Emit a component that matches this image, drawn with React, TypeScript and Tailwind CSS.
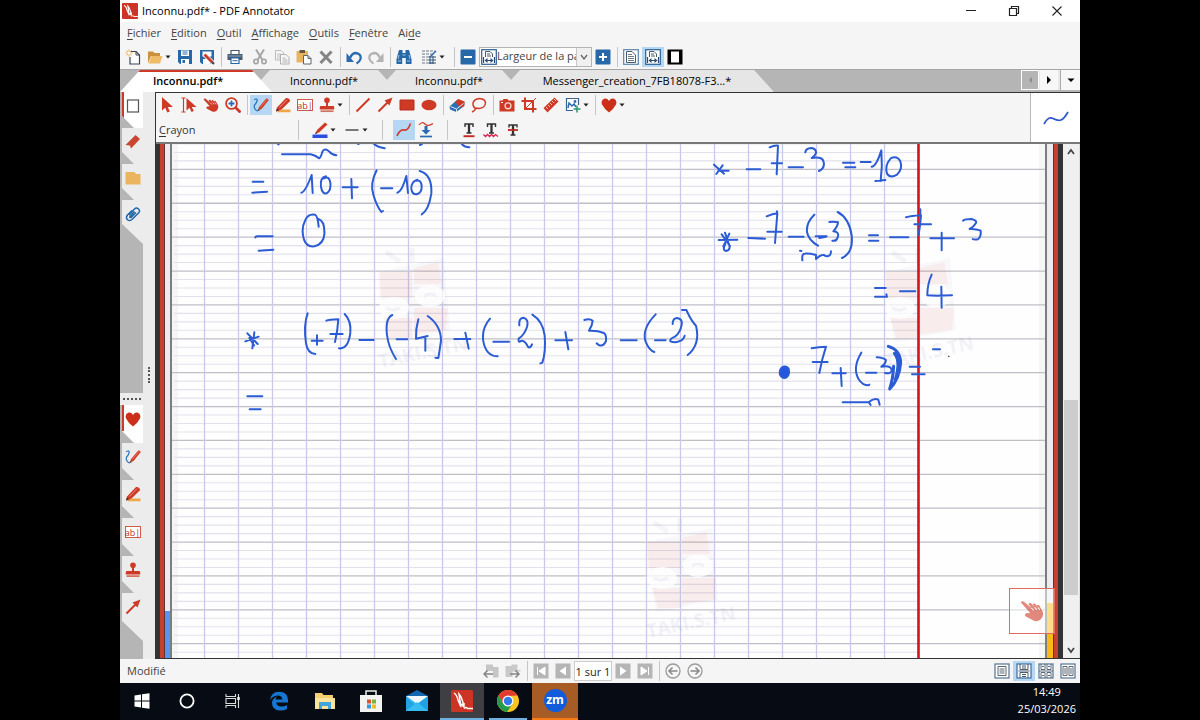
import React from "react";
import type { ReactNode } from "react";

const RED = "#cf3a26";
const BLUE = "#2a6bb0";
const GREY = "#a6a6a6";
const DARK = "#3c4650";

function Svg({ children, size = "size-4", box = "0 0 16 16" }: { children: ReactNode; size?: string; box?: string }) {
  return (
    <svg viewBox={box} className={`${size} shrink-0`} fill="none" aria-hidden="true">
      {children}
    </svg>
  );
}

const icons: Record<string, ReactNode> = {
  newDoc: (
    <>
      <path d="M6 2.500h5l3.500 3.500V15H5V8" stroke={DARK} strokeWidth="1.200" fill="#fff" />
      <path d="M11 2.500V6h3.500" stroke={DARK} />
      <path d="M4 .5v7M.5 4h7M1.500 1.500l5 5M6.500 1.500l-5 5" stroke="#eda54a" />
      <circle cx="4" cy="4" r="1.600" fill="#fff" />
    </>
  ),
  open: (
    <>
      <path d="M1 2.500h5L7.500 4H13v3H4l-3 7Z" fill="#c9913d" />
      <path d="M4.500 7H15.500l-2.500 7.500H1.500Z" fill="#eebb67" />
    </>
  ),
  save: (
    <>
      <path d="M1 1h14v14H3L1 13Z" fill="#2768a9" />
      <path d="M4 1.500h8v5.500H4ZM4 10h8v5H4Z" fill="#fff" />
      <path d="M5.500 3h5M5.500 5h5" stroke="#2768a9" />
      <path d="M5.500 11h2.500v3H5.500Z" fill="#2768a9" />
    </>
  ),
  saveAs: (
    <>
      <path d="M1 1h14v14H3L1 13Z" fill="#2768a9" />
      <path d="M3.500 2.500h9v5h-9ZM4 10h7v5H4Z" fill="#fff" />
      <path d="m5 5 9 9" stroke="#fff" strokeWidth="4.500" />
      <path d="m5.500 5.500 8 8" stroke={RED} strokeWidth="2.800" />
      <path d="m13 13 2 2" stroke="#444" strokeWidth="2" />
    </>
  ),
  print: (
    <>
      <path d="M4 1.500h8v4H4Z" fill="#fff" stroke="#4c5966" strokeWidth="1.200" />
      <path d="M.5 5h15v6H.5Z" fill="#4c5966" />
      <path d="M1.500 7h13" stroke="#83b0dd" />
      <path d="M4 9h8v5.500H4Z" fill="#fff" stroke="#2768a9" strokeWidth="1.200" />
      <path d="M5.500 11.700h5" stroke="#2768a9" />
    </>
  ),
  cut: (
    <>
      <path d="m4 .5 6.500 10.500M12 .5 5.500 11" stroke={GREY} strokeWidth="2" />
      <circle cx="4" cy="12.500" r="2.200" stroke={GREY} strokeWidth="1.700" />
      <circle cx="12" cy="12.500" r="2.200" stroke={GREY} strokeWidth="1.700" />
    </>
  ),
  copy: (
    <>
      <path d="M1.500 1.500H7L9.500 4V11h-8Z" stroke="#bcbcbc" fill="#f7f7f7" />
      <path d="M3 5h4M3 7h4M3 9h3" stroke="#bcbcbc" />
      <path d="M6.500 5.500h5.500l3 3V15H6.500Z" stroke="#b0b0b0" fill="#f7f7f7" />
      <path d="M8.500 9h3M8.500 11h5M8.500 13h5" stroke="#b0b0b0" />
    </>
  ),
  paste: (
    <>
      <path d="M.5 2h11.500v11.500H.5Z" fill="#eab35d" />
      <path d="M3.500 1h5.500v3H3.500Z" fill="#62594d" />
      <path d="M7.500 6.500H12l3 3V15H7.500Z" fill="#fff" stroke="#596673" />
      <path d="M12 6.500v3h3" stroke="#596673" />
    </>
  ),
  del: <path d="m2.500 2.500 11 11.500M13.500 2.500 2.500 14" stroke="#858585" strokeWidth="3" />,
  undo: (
    <>
      <path d="M4 9Q6 4 10 4 15.500 5 14.500 10 13.500 13 10.500 14.500" stroke={BLUE} strokeWidth="2.300" />
      <path d="M.5 4v9H8Z" fill={BLUE} />
    </>
  ),
  redo: (
    <>
      <path d="M12 9Q10 4 6 4 .5 5 1.500 10 2.500 13 5.500 14.500" stroke="#b3b3b3" strokeWidth="2.300" />
      <path d="M15.500 4v9H8Z" fill="#b3b3b3" />
    </>
  ),
  find: (
    <>
      <path d="M3 1h3.500v3H9.500V1H13l2.500 9v5H9.800V9H6.200v6H.5v-5Z" fill="#2768a9" />
      <path d="M3 6 2 10M13 6l1 4M2 12h3M11 12h3M6.500 6h3" stroke="#9fc5ea" />
    </>
  ),
  grid: (
    <>
      <path d="M1 2h13M1 5h11M1 8h8M1 11h8M1 14h11" stroke="#6e7b8b" strokeDasharray="3 1" />
      <path d="M8 8h7M8 11h7M8 14h7M9 7v8M12 7v8" stroke="#33537a" />
      <path d="m9 8 6-6" stroke={BLUE} strokeWidth="1.500" />
    </>
  ),
  minus: (
    <>
      <rect x=".5" y=".5" width="15" height="15" rx="1" fill="#2768a9" />
      <path d="M4 8h8" stroke="#fff" strokeWidth="2" />
    </>
  ),
  plus: (
    <>
      <rect x=".5" y=".5" width="15" height="15" rx="1" fill="#2768a9" />
      <path d="M4 8h8M8 4v8" stroke="#fff" strokeWidth="2" />
    </>
  ),
  fitWidth: (
    <>
      <rect x=".7" y=".7" width="14.600" height="14.600" stroke="#2c5f96" strokeWidth="1.200" fill="#fff" />
      <path d="M4.500 8V2.500H9L11.500 5v3" stroke="#4b5a69" />
      <path d="M6 5h3M6 7h4" stroke="#4b5a69" />
      <path d="M2.500 8v6M13.500 8v6M4 11.500h8" stroke="#2a4a70" strokeWidth="1.200" />
      <path d="M3.500 11.500 6.500 9v5ZM12.500 11.500 9.500 9v5Z" fill="#2a4a70" />
    </>
  ),
  fitPage: (
    <>
      <rect x=".7" y=".7" width="14.600" height="14.600" stroke="#5b84ad" strokeWidth="1.200" fill="#fff" />
      <path d="M3.500 2.500H9l3.500 3.500v7.500h-9Z" stroke="#4b5a69" />
      <path d="M5 5.500h4M5 7.500h6M5 9.500h6M5 11.500h6" stroke="#6e7b88" />
    </>
  ),
  full: (
    <>
      <path d="M.5.5h15v15H.5Z" fill="#000" />
      <path d="M4 2.500h8v11H4Z" fill="#fff" />
    </>
  ),
  select: <path d="M3 0v13.500l3.200-2.800L8.300 15.500l2.500-1.100-2-4.400H14Z" fill={RED} />,
  textSelect: (
    <>
      <path d="M.5 1h4M2.500 1v14M.5 15h4" stroke={RED} strokeWidth="1.100" />
      <path d="M5.500 1v12.500l3-2.700 2 4.300 2.300-1-2-4.200H15.500Z" fill={RED} />
    </>
  ),
  hand: (
    <>
      <path
        d="M.6 2.400Q1.300 1 2.700 1.800L7.500 6 5.600 3.400Q6.200 2.200 7.400 2.900L9.800 5.600 8.500 3.600Q9.200 2.500 10.200 3.200L12 5.700 11.200 4.300Q11.900 3.400 12.800 4.200L15.200 8.600Q16 11.500 13.700 13.700 11.300 15.600 8.700 14.200L3.600 11.500Q2.700 9.900 4.400 9.500L6.800 9.300Z"
        fill={RED}
      />
      <path d="m7.500 6 1.600 1.600M9.800 5.600l1.400 1.700M12 5.700l1.100 1.600" stroke="#fff" strokeWidth=".7" />
    </>
  ),
  zoom: (
    <>
      <circle cx="6.500" cy="6.500" r="5.400" stroke={RED} strokeWidth="1.800" fill="#fff" />
      <path d="m10.500 10.500 5 5" stroke={RED} strokeWidth="2.700" />
      <path d="M3.500 6.500h6M6.500 3.500v6" stroke={BLUE} strokeWidth="1.800" />
    </>
  ),
  pen: (
    <>
      <path d="M5 13.500 6 10 13.300 1.500q1.700-.5 2.500 1.500L8.500 12Z" fill={RED} />
      <path d="m7 10.500 7.500-8.300" stroke="#e98a78" strokeWidth=".8" />
      <path d="m4.500 14 .8-2 1.500 1.300Z" fill="#333" />
      <path d="M1 2.500Q5 1 4 4T1.500 8Q.8 10 2 12T5 14" stroke="#2873b8" strokeWidth="1.200" />
    </>
  ),
  marker: (
    <>
      <path d="M4 12.500h11.500v2.700H2Z" fill="#eda74a" />
      <path d="M2 10.500 11 1q3.500-.3 4.200 3L6.500 12.500 1 14.500Z" fill={RED} />
      <path d="m4.500 10.500 7.500-7.800" stroke="#e98a78" />
      <path d="m1 14.500 1-3L4 13.400Z" fill="#333" />
    </>
  ),
  stamp: (
    <>
      <circle cx="8" cy="3.300" r="2.800" fill={RED} />
      <path d="M7 5h2v4h5q1.200 0 1.200 1.200V12.500H.8v-2.300Q.8 9 2 9h5Z" fill={RED} />
      <path d="M1.500 14.200h13" stroke="#d4705e" strokeWidth="1.700" />
    </>
  ),
  line: <path d="M1.500 14.500 14.500 1.500" stroke={RED} strokeWidth="1.900" />,
  arrow: (
    <>
      <path d="M1.500 14.500 12 4" stroke={RED} strokeWidth="2" />
      <path d="M15.500.5 12.500 8.500 7.500 3.500Z" fill={RED} />
    </>
  ),
  rect: <path d="M1 3h14v10H1Z" fill={RED} stroke="#b52f1d" />,
  ellipse: <ellipse cx="8" cy="8" rx="7.500" ry="5.200" fill={RED} />,
  eraser: (
    <>
      <path d="m.5 9.500 8-7 7 2.500-.2 4-8 6L1 12.500Z" fill="#2b6fb5" />
      <path d="m6 5 3.500-3 6 2.500-.2 4L12 11Z" fill={RED} />
      <path d="m1.500 9.500 6 2.500 7-5.500M7.500 12v3" stroke="#dfeaf5" />
    </>
  ),
  lasso: (
    <>
      <path d="M5.500 12Q1.500 10 2 6 3 2 8.500 1.500 14.500 2 14.500 6 14 11 8 11.500L5 11" stroke={RED} strokeWidth="1.500" />
      <path d="M5 11Q4 14 1 15" stroke={RED} strokeWidth="1.400" />
    </>
  ),
  camera: (
    <>
      <path d="M.5 3.500h3L4.500 2h4l1 1.500h6v11H.5Z" fill={RED} />
      <circle cx="9" cy="8.800" r="3.600" fill="#f7d7d0" />
      <circle cx="9" cy="8.800" r="2.300" fill={RED} />
      <path d="M2 5.500h2" stroke="#fff" />
    </>
  ),
  crop: (
    <>
      <path d="M4 .5v11.500h11.500M.5 4h11.500v11.500" stroke={RED} strokeWidth="2" />
      <path d="m3 13 12-12" stroke={RED} />
    </>
  ),
  ruler: (
    <>
      <path d="M.5 11 11.500.5l4 4L4.500 15.500Z" fill={RED} />
      <path d="m3 10 2 2M5 8l2 2M7 6l2 2M9 4l2 2M11 2l2 2" stroke="#f4c2b8" />
    </>
  ),
  image: (
    <>
      <path d="M13.500 8V1.500h-12v12H8" stroke="#3a648f" strokeWidth="1.200" fill="#fff" />
      <circle cx="10" cy="4.500" r="1.400" fill={BLUE} />
      <path d="m3 11 1-5 3 3 2-2 2 3" stroke={BLUE} strokeWidth="1.500" />
      <path d="M12 8.500v7M8.500 12h7" stroke="#249b69" strokeWidth="1.500" />
    </>
  ),
  heart: <path d="M8 15.500Q3 11.500 1 7.500-.5 3 3.500 1.600 6.500 1.200 8 4 9.500 1.200 12.500 1.600 16.500 3 15 7.500 13 11.500 8 15.500Z" fill="#cd3019" />,
  penColor: (
    <>
      <path d="M.5 12.500h15V16H.5Z" fill="#2a4fe0" />
      <path d="M3.500 11.500 5 8 13 .5 15.500 2.500 7 10.500Z" fill={RED} />
      <path d="m3 12 1-2.300 1.500 1.600Z" fill="#333" />
    </>
  ),
  width: <path d="M1.500 8h13" stroke="#333" strokeWidth="1.300" />,
  smooth: <path d="M1 14Q4 7 8 8T14.500 1.500" stroke={RED} strokeWidth="1.600" />,
  pressure: (
    <>
      <path d="M1 3Q4-1 7 2T15 1.500" stroke={RED} strokeWidth="1.200" />
      <path d="M6.500 4h3v4h3L8 12.500 3.500 8h3Z" fill={BLUE} />
      <path d="M2 14.500h12" stroke={BLUE} strokeWidth="1.700" />
    </>
  ),
  underline: (
    <>
      <path d="M4 5V2h8v3M5.500 11h5" stroke="#333" strokeWidth="1.400" />
      <path d="M8 2v9" stroke="#333" strokeWidth="2.300" />
      <path d="M2.500 14.200h11" stroke="#c62720" strokeWidth="1.900" />
    </>
  ),
  squiggle: (
    <>
      <path d="M4.500 5V2h8v3M6 11h5" stroke="#333" strokeWidth="1.400" />
      <path d="M8.500 2v9" stroke="#333" strokeWidth="2.300" />
      <path d="m.5 12.500 2 2 2-2 2 2 2-2 2 2 2-2 2.500 2" stroke="#d3254a" strokeWidth="1.300" />
    </>
  ),
  strike: (
    <>
      <path d="M4 5.500V3h8v2.500M5.500 13h5" stroke="#333" strokeWidth="1.400" />
      <path d="M8 3v10" stroke="#333" strokeWidth="2.300" />
      <path d="M3 8h10" stroke="#c62720" strokeWidth="1.800" />
    </>
  ),
  page: <rect x="2.500" y="2" width="11" height="12" stroke="#555" strokeWidth="1.200" fill="#fff" />,
  bookmark: <path d="M.5 11 10.500 1 15 5 6 14.500 5 11.500Z" fill="#c84632" />,
  note: <path d="M.5 2h9l1.500 2h4.500v10.500H.5Z" fill="#ebb55e" />,
  clip: (
    <path
      d="m4 9 5.500-6q2-2 4 0t0 4L7 13.500q-2.500 2-4.500.2T2.500 9L7 4.500M9.500 5.500 5 10.500q-.6 1.500 1 1l5-5"
      stroke="#2468aa"
      strokeWidth="1.500"
    />
  ),
  first: (
    <>
      <rect x=".5" y=".5" width="15" height="15" fill="#b5b5b5" />
      <path d="M4.500 4v8M12 4v8L6 8Z" fill="#fff" stroke="#fff" />
    </>
  ),
  prev: (
    <>
      <rect x=".5" y=".5" width="15" height="15" fill="#b5b5b5" />
      <path d="M11 3.500v9L4.500 8Z" fill="#fff" />
    </>
  ),
  next: (
    <>
      <rect x=".5" y=".5" width="15" height="15" fill="#b5b5b5" />
      <path d="M5 3.500v9L11.500 8Z" fill="#fff" />
    </>
  ),
  last: (
    <>
      <rect x=".5" y=".5" width="15" height="15" fill="#b5b5b5" />
      <path d="M11.500 4v8M4 4v8l6-4Z" fill="#fff" stroke="#fff" />
    </>
  ),
  docPrev: (
    <>
      <path d="M3 1.500h7V4h5.500v10.500H10V8H3Z" fill="#c6c6c6" />
      <path d="M1 11h9M4.500 7.500 1 11l3.500 3.500" stroke="#858585" strokeWidth="1.500" />
    </>
  ),
  docNext: (
    <>
      <path d="M.5 3h6V1.500h6V7h3v1.500H.5Z" fill="#c9c9c9" />
      <path d="M.5 8h7v6h-7Z" fill="#c9c9c9" />
      <path d="M5 11h9M10.500 7.500 14 11l-3.500 3.500" stroke="#858585" strokeWidth="1.500" />
    </>
  ),
  back: (
    <>
      <circle cx="8" cy="8" r="7" stroke="#9a9a9a" strokeWidth="1.300" />
      <path d="M4 8h8.500M7.500 4.500 4 8l3.500 3.500" stroke="#8a8a8a" strokeWidth="1.500" />
    </>
  ),
  forward: (
    <>
      <circle cx="8" cy="8" r="7" stroke="#9a9a9a" strokeWidth="1.300" />
      <path d="M3.500 8H12M8.500 4.500 12 8l-3.500 3.500" stroke="#8a8a8a" strokeWidth="1.500" />
    </>
  ),
  viewSingle: (
    <>
      <rect x="1" y="1" width="14" height="14" stroke="#557392" strokeWidth="1.200" fill="#fff" />
      <path d="M4 3.500h8v9H4ZM5.500 6h5M5.500 8h5M5.500 10h5" stroke="#5c6873" />
    </>
  ),
  viewScroll: (
    <>
      <rect x="1" y="1" width="14" height="14" stroke="#3f6d9b" strokeWidth="1.200" fill="#fff" />
      <path d="M4 1v5.500h8V1M4 15V9.500h8V15M2.500 8h11M6 3h4M6 5h4M6 11.500h4M6 13.500h4" stroke="#4a5c70" />
    </>
  ),
  viewGrid: (
    <>
      <rect x="1" y="1" width="14" height="14" stroke="#557392" strokeWidth="1.200" fill="#fff" />
      <path d="M3 1v5.500h4V1M9 1v5.500h4V1M3 15V9.500h4V15M9 15V9.500h4V15M1 8h14M4 3.500h2M10 3.500h2M4 12.500h2M10 12.500h2" stroke="#5a6a7b" />
    </>
  ),
  viewDouble: (
    <>
      <rect x="1" y="1" width="14" height="14" stroke="#557392" strokeWidth="1.200" fill="#fff" />
      <path d="M3 3.500h4v9H3ZM9 3.500h4v9H9ZM4 6h2M4 8h2M4 10h2M10 6h2M10 8h2M10 10h2" stroke="#5c6873" />
    </>
  ),
};

function TextBoxIcon() {
  return (
    <span className="flex h-3 w-4 items-center justify-center border border-[#cf5a4a] bg-white text-[9px] leading-none text-[#b8321f]">
      ab|
    </span>
  );
}

function Tool({ icon, label, active = false, wide = "w-[22px]" }: { icon: string; label: string; active?: boolean; wide?: string }) {
  return (
    <button
      type="button"
      aria-label={label}
      className={`flex h-5 shrink-0 items-center justify-center ${wide} ${active ? "bg-[#b5d7f3]" : ""}`}
    >
      {icon === "textBox" ? <TextBoxIcon /> : <Svg>{icons[icon]}</Svg>}
    </button>
  );
}

function Caret({ label }: { label: string }) {
  return (
    <button type="button" aria-label={label} className="-ml-1 flex h-5 w-3 shrink-0 items-center justify-center">
      <Svg size="size-1.5" box="0 0 6 6">
        <path d="M.5 1.500h5L3 4.500Z" fill="#222" />
      </Svg>
    </button>
  );
}

function Sep() {
  return (
    <span className="flex h-5 w-1.5 shrink-0 justify-center">
      <span className="w-px bg-[#c6c6c6]" />
    </span>
  );
}

function AppLogo({ size }: { size: string }) {
  return (
    <Svg size={size} box="0 0 22 22">
      <rect width="22" height="22" rx="1.500" fill="#cd3426" />
      <path d="M3 3q3 2 4 7l3 7L8 4q3 3 5 13" stroke="#fff" strokeWidth="1.500" />
      <path d="m9 14 4 4 1-5" fill="#fff" />
      <path d="M13 18.500q2-2 3.500 0H22" stroke="#fff" strokeWidth="1.300" />
    </Svg>
  );
}

const menus = [
  ["", "F", "ichier"],
  ["", "E", "dition"],
  ["", "O", "util"],
  ["", "A", "ffichage"],
  ["", "O", "utils"],
  ["", "F", "enêtre"],
  ["Ai", "d", "e"],
];

function TitleBar() {
  return (
    <header className="flex h-[22px] shrink-0 items-center bg-white pl-0.5">
      <AppLogo size="size-4" />
      <h1 className="ml-1 text-[11px] leading-4 text-black">Inconnu.pdf* - PDF Annotator</h1>
      <div className="ml-auto flex">
        <button type="button" aria-label="Réduire" className="flex h-5 w-[43px] items-center justify-center">
          <Svg size="size-3" box="0 0 12 12"><path d="M1 5.500h10" stroke="#222" /></Svg>
        </button>
        <button type="button" aria-label="Restaurer" className="flex h-5 w-[43px] items-center justify-center">
          <Svg size="size-3" box="0 0 12 12">
            <path d="M1.500 3.500h7v7h-7ZM3.500 3.500v-2h7v7h-2" stroke="#222" strokeWidth="1.200" />
          </Svg>
        </button>
        <button type="button" aria-label="Fermer" className="mr-0.5 flex h-5 w-[43px] items-center justify-center">
          <Svg size="size-3" box="0 0 12 12"><path d="m1.500 1.500 9 9M10.500 1.500l-9 9" stroke="#222" strokeWidth="1.100" /></Svg>
        </button>
      </div>
    </header>
  );
}

function MenuBar() {
  return (
    <nav className="flex h-[22px] shrink-0 items-center gap-2.5 bg-[#f5f5f5] pl-[7px] text-[11px] leading-4 text-[#444]">
      {menus.map(([pre, key, post], i) => (
        <button type="button" key={i}>
          {pre}
          <span className="underline underline-offset-2">{key}</span>
          {post}
        </button>
      ))}
    </nav>
  );
}

function MainToolbar() {
  return (
    <div role="toolbar" aria-label="Standard" className="flex h-[25px] shrink-0 items-center overflow-hidden bg-[#f5f5f5] pl-0.5">
      <Tool icon="newDoc" label="Nouveau" />
      <Tool icon="open" label="Ouvrir" />
      <Caret label="Fichiers récents" />
      <Tool icon="save" label="Enregistrer" />
      <Tool icon="saveAs" label="Enregistrer sous" />
      <Sep />
      <Tool icon="print" label="Imprimer" />
      <div className="ml-[3px] flex">
        <Tool icon="cut" label="Couper" />
        <Tool icon="copy" label="Copier" />
        <Tool icon="paste" label="Coller" />
        <Tool icon="del" label="Supprimer" />
      </div>
      <Sep />
      <Tool icon="undo" label="Annuler" />
      <Tool icon="redo" label="Rétablir" />
      <Sep />
      <Tool icon="find" label="Rechercher" />
      <div className="mx-[3px] flex">
        <Tool icon="grid" label="Grille" />
        <Caret label="Options de grille" />
      </div>
      <Sep />
      <Tool icon="minus" label="Zoom arrière" />
      <div className="flex h-5 w-[113px] shrink-0 items-center border border-[#b5b5b5] bg-white pl-px">
        <Svg>{icons.fitWidth}</Svg>
        <select aria-label="Zoom" className="h-full min-w-0 flex-1 appearance-none overflow-hidden border-r border-[#c8c8c8] text-[11px] text-clip text-[#444]">
          <option>Largeur de la page</option>
        </select>
        <span className="flex h-full w-[14px] items-center justify-center bg-[#f0f0f0]">
          <Svg size="size-2.5" box="0 0 10 10"><path d="m2 3 3 4 3-4" stroke="#666" strokeWidth="1.300" /></Svg>
        </span>
      </div>
      <Tool icon="plus" label="Zoom avant" />
      <Sep />
      <Tool icon="fitPage" label="Page entière" />
      <Tool icon="fitWidth" label="Largeur de la page" active />
      <Tool icon="full" label="Plein écran" />
    </div>
  );
}

function DocTab({ name, width }: { name: string; width: string }) {
  return (
    <button
      type="button"
      role="tab"
      className={`-ml-[22px] h-[22px] shrink-0 bg-[#e6e6e6] text-[11px] text-black [clip-path:polygon(20px_0,calc(100%-20px)_0,100%_100%,0_100%)] ${width}`}
    >
      {name}
    </button>
  );
}

function TabStrip() {
  return (
    <div className="flex h-[23px] shrink-0 items-start justify-between border-t border-[#a6a6a6] bg-[#b5b5b5]">
      <div role="tablist" className="flex min-w-0 overflow-hidden">
        <button
          type="button"
          role="tab"
          aria-selected="true"
          className="relative z-10 flex h-[22px] w-[152px] shrink-0 items-center bg-white pl-[33px] text-[11px] font-semibold text-black [clip-path:polygon(20px_0,calc(100%-20px)_0,100%_100%,0_100%)]"
        >
          <span className="absolute inset-x-0 top-0 h-0.5 bg-[#cf3a26]" />
          Inconnu.pdf*
        </button>
        <DocTab name="Inconnu.pdf*" width="w-[148px]" />
        <DocTab name="Inconnu.pdf*" width="w-[146px]" />
        <DocTab name="Messenger_creation_7FB18078-F3...*" width="w-[274px]" />
      </div>
      <div className="flex h-5 shrink-0 gap-px bg-[#e8e8e8]">
        <button type="button" disabled aria-label="Onglet précédent" className="flex w-[18px] items-center justify-center border border-white bg-[#b5b5b5]">
          <Svg size="size-2" box="0 0 8 8"><path d="M6 1v6L3 4Z" fill="#8d8d8d" /></Svg>
        </button>
        <button type="button" aria-label="Onglet suivant" className="flex w-[18px] items-center justify-center bg-[#f7f7f7]">
          <Svg size="size-2" box="0 0 8 8"><path d="M2 0v8l4-4Z" fill="#000" /></Svg>
        </button>
        <button type="button" aria-label="Liste des onglets" className="ml-px flex w-5 items-center justify-center border-l border-[#aaa] bg-[#f7f7f7]">
          <Svg size="size-2" box="0 0 8 8"><path d="M.5 2.500h7L4 6Z" fill="#000" /></Svg>
        </button>
      </div>
    </div>
  );
}

function RailTab({ icon, label, active = false, last = false, tall }: { icon: string; label: string; active?: boolean; last?: boolean; tall: string }) {
  const shape = last
    ? "[clip-path:polygon(2px_0,100%_0,100%_100%,2px_calc(100%-20px))]"
    : "[clip-path:polygon(2px_0,100%_0,100%_100%,14px_100%,2px_calc(100%-12px))]";
  return (
    <button
      type="button"
      aria-label={label}
      className={`relative flex w-[23px] shrink-0 justify-center pt-1.5 pl-0.5 ${tall} ${shape} ${active ? "bg-white" : "bg-[#ececec]"}`}
    >
      {active && <span className="absolute top-0 left-0.5 h-[26px] w-0.5 bg-[#c93c2b]" />}
      {icon === "textBox" ? <span className="pt-0.5"><TextBoxIcon /></span> : <Svg>{icons[icon]}</Svg>}
    </button>
  );
}

function Rail() {
  return (
    <aside className="flex w-[35px] shrink-0 bg-[#ececec]">
      <div className="flex w-[23px] flex-col bg-[#b5b5b5]">
        <div className="flex flex-1 flex-col">
          <RailTab icon="page" label="Pages" active tall="h-9" />
          <RailTab icon="bookmark" label="Signets" tall="h-9" />
          <RailTab icon="note" label="Notes" tall="h-9" />
          <RailTab icon="clip" label="Pièces jointes" last tall="h-11" />
        </div>
        <div className="flex h-3 items-center justify-center bg-[#ececec]">
          <span className="w-[18px] border-t-2 border-dotted border-[#555]" />
        </div>
        <div className="flex h-[254px] flex-col">
          <RailTab icon="heart" label="Favoris" active tall="h-[38px]" />
          <RailTab icon="pen" label="Crayon" tall="h-[37px]" />
          <RailTab icon="marker" label="Surligneur" tall="h-[38px]" />
          <RailTab icon="textBox" label="Texte" tall="h-[38px]" />
          <RailTab icon="stamp" label="Tampon" tall="h-[37px]" />
          <RailTab icon="arrow" label="Flèche" last tall="h-12" />
        </div>
      </div>
      <span className="mx-auto mt-[275px] h-4 border-l-2 border-dotted border-[#555]" />
    </aside>
  );
}

function ToolPanel() {
  return (
    <div className="flex h-[49px] shrink-0 bg-[#f5f5f5]">
      <div className="min-w-0 flex-1 overflow-hidden pt-px">
        <div role="toolbar" aria-label="Outils" className="flex h-[22px] items-center">
          <Tool icon="select" label="Sélection" />
          <Tool icon="textSelect" label="Sélection de texte" />
          <Tool icon="hand" label="Défilement" />
          <Tool icon="zoom" label="Loupe" />
          <Sep />
          <Tool icon="pen" label="Crayon" active />
          <Tool icon="marker" label="Surligneur" />
          <Tool icon="textBox" label="Texte" />
          <Tool icon="stamp" label="Tampon" />
          <Caret label="Choisir un tampon" />
          <Sep />
          <Tool icon="line" label="Ligne" />
          <Tool icon="arrow" label="Flèche" />
          <Tool icon="rect" label="Rectangle" />
          <Tool icon="ellipse" label="Ellipse" />
          <Sep />
          <Tool icon="eraser" label="Gomme" />
          <Tool icon="lasso" label="Lasso" />
          <Sep />
          <Tool icon="camera" label="Instantané" />
          <Tool icon="crop" label="Rogner" />
          <Tool icon="ruler" label="Règle" />
          <Tool icon="image" label="Insérer une image" />
          <Caret label="Options d'insertion" />
          <Sep />
          <Tool icon="heart" label="Favoris" />
          <Caret label="Choisir un favori" />
        </div>
        <div role="toolbar" aria-label="Crayon" className="mt-[3px] flex h-[22px] items-center pl-[3px]">
          <span className="w-[136px] shrink-0 text-[11px] text-[#333]">
            <span className="underline underline-offset-2">C</span>rayon
          </span>
          <Sep />
          <div className="ml-2 flex">
            <Tool icon="penColor" label="Couleur" />
            <span className="mr-0.5 flex"><Caret label="Choisir la couleur" /></span>
            <Tool icon="width" label="Épaisseur" />
            <Caret label="Choisir l'épaisseur" />
          </div>
          <div className="mx-2 flex"><Sep /></div>
          <Tool icon="smooth" label="Lissage" active />
          <Tool icon="pressure" label="Pression" />
          <div className="mr-2 ml-[7px] flex"><Sep /></div>
          <Tool icon="underline" label="Souligner" />
          <Tool icon="squiggle" label="Souligner ondulé" />
          <Tool icon="strike" label="Barrer" />
        </div>
      </div>
      <div className="flex w-[50px] shrink-0 items-center justify-center border-l border-[#b8b8b8] bg-white">
        <Svg size="size-7" box="0 0 28 28">
          <path d="M2 20Q6 12 11 14.500T19 16 26 8" stroke="#2f56cc" strokeWidth="1.700" />
        </Svg>
      </div>
    </div>
  );
}

const COLS = Array.from({ length: 21 }, (_, i) => 204.5 + i * 34);
const ROWS = Array.from({ length: 62 }, (_, i) => 143.98 + i * 8.47);

function Watermark({ x, y }: { x: number; y: number }) {
  return (
    <g transform={`translate(${x} ${y})`}>
      <path d="m6 18 66-14 6 72-62 12Z" fill="#6a6a8a" opacity=".04" />
      <path d="M8 18h32v26H8ZM42 14l24-6 4 22H42ZM42 54h34l-2 22-32 4ZM12 64h28v20H18Z" fill="#ff3b20" opacity=".06" />
      <path d="m14-2 14 10M40-6v14" stroke="#666688" strokeWidth="5" opacity=".06" />
      <ellipse cx="22" cy="54" rx="15" ry="11" fill="#fff" opacity=".75" />
      <ellipse cx="58" cy="42" rx="15" ry="11" fill="#fff" opacity=".75" />
      <path d="M14 54q7 4 14 0M52 42q6-4 12 0" stroke="#666688" strokeWidth="3" opacity=".07" />
      <text x="8" y="114" transform="rotate(-12 8 114)" className="text-[19px] font-bold" fill="#666688" opacity=".07">TAKI.S.TN</text>
    </g>
  );
}

function PageCanvas() {
  return (
    <svg
      viewBox="156 144 907 514"
      preserveAspectRatio="xMinYMin slice"
      className="size-full"
      fill="none"
      role="img"
      aria-label="Page de cahier avec calculs manuscrits"
    >
      <path d="M156 144h907v600H156Z" fill="#353336" />
      <path d="M160 144h898v600H160Z" fill="#c5402f" />
      <path d="M164 144h890v600H164Z" fill="#5c3431" />
      <path d="M165 144h888v600H165Z" fill="#ececee" />
      <path d="M165 611h5v140h-5Z" fill="#5b93f5" />
      <path d="M1047 603h6v140h-6Z" fill="#fcb814" />
      <path d="M170 144h877v600H170Z" fill="#7c7e7e" />
      <path d="M172 144h873v600H172Z" fill="#fefeff" />
      <path d="M172 144h6v600h-6ZM1039 144h6v600h-6Z" fill="#f6f6f6" />
      {ROWS.map((y, i) =>
        i % 4 === 3 ? (
          <path key={i} d={`M172 ${y}H1045`} stroke="#bfbfc8" strokeWidth="1.300" />
        ) : (
          <path key={i} d={`M174 ${y}H918`} stroke="#e2e2ec" strokeWidth="1.100" />
        ),
      )}
      {COLS.map((x) => (
        <path key={x} d={`M${x} 144V744`} stroke="#c9c9ea" strokeWidth="1.300" />
      ))}
      <Watermark x={372} y={254} />
      <Watermark x={878} y={254} />
      <Watermark x={640} y={524} />
      <path d="M918.500 144V744" stroke="#d3121e" strokeWidth="2.600" />

      <g stroke="#2c5cd4" strokeWidth="6" strokeLinecap="round" strokeLinejoin="round">
        <g transform="translate(240 140) scale(.33333)">
          <path d="M126 43h86q14 3 26 12 4-2 10-22 8-10 20 2 8 10 21 11" />
          <path d="M112 10l4 3M352 10l4 2M400 10q12 12 34 15M540 15l6-3M664 10q8 12 24 12" />
          <path d="M38 125h32M37 158l44-3" />
          <path d="M184 158q12-2 31-53l3 54M258 109q-19 4-15 32 4 22 17 19 14-8 11-32-4-22-19-13" />
          <path d="M308 142h45M334 117l2 58M410 91q-21 40-10 73 10 34 24 52l5-3M423 145h34M472 158q14-3 27-50l5 51M532 119q-19 6-18 27 2 18 16 17 15-4 15-21 0-24-16-20M539 93q38 10 35 68-8 50-29 62" />
          <path d="M236 260q-3-32-11-36-20-4-29 16-14 26-4 59 8 23 31 20 28-7 30-36 2-40-18-46M46 292q2-3 6-3h46M56 332l44-3" />
          <path d="m16 604 40-14M22 580l31 32M43 577l-6 48M28 594l14 22" />
          <path d="M203 520q-13 35-5 90 5 31 28 32M215 602h33M231 586v28M259 542q8-3 36-4-2 34-10 68M271 582h37M314 522q20 20 17 56-6 50-34 47M358 600h43M457 525q-22 10-16 60 4 36 27 72M470 598h32M535 538q-8 28-7 58l35-8M556 594v38M563 528q40 28 40 74-4 30-8 52l-9-1" />
          <path d="M643 597h48M676 578l10 48M22 769h45M29 808h33" />
        </g>
        <g transform="translate(440 280) scale(.33333)">
          <path d="M150 116q-26 30-20 68 8 44 43 45M160 185h47M238 136q-2-22 12-23 17 4 11 28-8 24-25 35-2 14 7 7 10-5 22 19 7 2 11-9" />
          <path d="M277 104q31 19 37 62 4 50-7 82l-6 2M346 181h50M376 156l9 52M433 120q16-6 25 2-1 15-11 30 26-1 45 7 8 7 6 24-8 17-20 13l-8-6" />
          <path d="M542 181h48M647 103q-43 44-30 82 10 26 26 31M645 181h32M698 132q0-18 14-18 16 3 13 20-4 24-20 36-17 6-14 14 14 5 26 0 13-3 17-17M726 90h13q16 35 29 47 14 56-25 88" />
        </g>
        <g transform="translate(700 140) scale(.33333)">
          <path d="m42 74 30 27M68 76 49 102M55 92h31M140 88h41M209 22q14-6 25-5l-4 86M215 70h31M266 82h43M316 37q1-12 18-13 15 2 14 15-2 8-13 15 33-6 36 12 4 18-14 27" />
          <path d="M429 68h34M436 82h30M482 66h30M515 80q14-1 29-49 4 45-2 92M526 123l30-3M570 58q-16 18-9 43 10 15 30 3 18-18 10-40-10-18-29-9" />
          <path d="m56 300 56-1M65 283l25 35M88 281l-18 38M75 278l9 28q12 24-6 27-12-2-2-21M145 294l50 2M200 229q18-8 32-9l-7 89M202 275h43M231 214v10M266 290h45M343 224q-25 24-22 52 4 24 33 41M347 289h33M358 294l20-4M388 246q16-2 26 1-1 12-14 27 19 1 13 18-4 13-16 10" />
          <path d="M413 216q34 18 42 70 6 52-29 68M300 332l4 1M307 361q-2-20 7-20 14-1 34 4v12q14-14 24-12 8 7 17 1 4-4 4-12" />
          <path d="M507 286h27M507 302h28M570 292h55M618 232q15-4 45-6-2 28-7 58M661 208v20M643 253h50M691 295h71M725 278v53M789 242q6-5 26-5 17 5 13 12-7 12-19 18 20-1 33 5 2 18-8 26-12 2-16-1" />
          <path d="M525 444h32M525 470h36l-2-7M600 454h46M695 404q-13 28-13 62 20 2 74 0M724 440l1 63" />
          <path d="M335 625q20-5 43-5-12 36-20 79M338 666h45M397 700h40M422 684l3 54M484 638q-27 44-9 78 12 20 31 20l2-2M498 698h31M530 652q20 1 28 8-2 13-14 20 27-5 31 9 0 14-20 10" />
          <path d="M565 619q36 10 37 50-4 50-33 78 10-30 12-68M583 640q20 24 3 78" strokeWidth="9" />
          <path d="M629 680h31M636 703h38M699 628h21M428 787h78q15-14 29-8l4 15M507 788l5 7" />
          <path d="M245 683q12-9 21 3 4 18-6 26-12 6-20-8-3-12 5-21Z" fill="#2556e0" />
          <circle cx="746" cy="649" r="1" stroke="#222" strokeWidth="2" />
        </g>
      </g>
    </svg>
  );
}

function Document() {
  return (
    <div className="flex min-h-0 flex-1 border-t-2 border-[#77787a]">
      <div className="relative min-w-0 flex-1 overflow-hidden bg-[#353336]">
        <div className="absolute inset-0"><PageCanvas /></div>
        <button
          type="button"
          aria-label="Défilement tactile"
          className="absolute right-2 bottom-6 flex size-[46px] items-center justify-center border border-[#df6b62] bg-white/50"
        >
          <span className="opacity-60"><Svg size="size-6">{icons.hand}</Svg></span>
        </button>
      </div>
      <div className="flex w-[17px] shrink-0 flex-col border-r border-[#ddd] bg-[#f0f0f0]">
        <button type="button" aria-label="Défiler vers le haut" className="flex h-4 items-center justify-center">
          <Svg size="size-2.5" box="0 0 10 10"><path d="m2 7 3-4 3 4" stroke="#444" strokeWidth="1.700" /></Svg>
        </button>
        <div className="flex flex-1 flex-col">
          <span className="flex-[240]" />
          <span className="mx-px flex-[195] bg-[#cdcdcd]" />
          <span className="flex-[47]" />
        </div>
        <button type="button" aria-label="Défiler vers le bas" className="flex h-4 items-center justify-center">
          <Svg size="size-2.5" box="0 0 10 10"><path d="m2 3 3 4 3-4" stroke="#444" strokeWidth="1.700" /></Svg>
        </button>
      </div>
    </div>
  );
}

function StatusBar() {
  return (
    <footer className="flex h-6 shrink-0 items-center justify-between bg-[#f5f5f5] pr-px pl-[7px] text-[11px] text-[#444]">
      <span className="flex-1">Modifié</span>
      <div className="flex items-center pr-5">
        <Tool icon="docPrev" label="Document précédent" />
        <Tool icon="docNext" label="Document suivant" />
        <Sep />
        <Tool icon="first" label="Première page" />
        <Tool icon="prev" label="Page précédente" />
        <input aria-label="Page" defaultValue="1 sur 1" className="h-5 w-[38px] border border-[#ccc] bg-white text-center text-[11px] text-[#222]" />
        <Tool icon="next" label="Page suivante" />
        <Tool icon="last" label="Dernière page" />
        <Sep />
        <Tool icon="back" label="Vue précédente" />
        <Tool icon="forward" label="Vue suivante" />
      </div>
      <div className="flex flex-1 justify-end">
        <Tool icon="viewSingle" label="Page unique" />
        <Tool icon="viewScroll" label="Continu" active />
        <Tool icon="viewGrid" label="Double continu" />
        <Tool icon="viewDouble" label="Double page" />
      </div>
    </footer>
  );
}

function TaskButton({ label, children, tone = "", width = "w-[46px]" }: { label: string; children: ReactNode; tone?: string; width?: string }) {
  return (
    <button type="button" aria-label={label} className={`flex h-full shrink-0 items-center justify-center border-b-2 ${width} ${tone || "border-transparent"}`}>
      {children}
    </button>
  );
}

function Taskbar() {
  return (
    <footer className="flex h-[37px] shrink-0 justify-between bg-[#070b13]">
      <div className="flex">
        <TaskButton label="Démarrer" width="w-11">
          <Svg><path d="M.5 2.500 7 1.500V7.500H.5ZM8 1.300 15.500.2V7.500H8ZM.5 8.500H7v6L.5 13.500ZM8 8.500h7.500v7.300L8 14.700Z" fill="#fff" /></Svg>
        </TaskButton>
        <TaskButton label="Cortana">
          <Svg><circle cx="8" cy="8" r="6.600" stroke="#fff" strokeWidth="1.800" /></Svg>
        </TaskButton>
        <TaskButton label="Vue des tâches">
          <Svg><path d="M1 1v2.500h9.500V1M1 15v-2.500h9.500V15M1 5.500h9.500v5H1ZM13.500 1v14" stroke="#ddd" strokeWidth="1.100" /><path d="M12.300 4h2.400v3h-2.400Z" fill="#fff" /></Svg>
        </TaskButton>
        <TaskButton label="Edge">
          <Svg size="size-5" box="0 0 20 20">
            <path d="M1 9Q2 1 10 .8 19 1 19 9v2.500H7.200q.5 4 5.300 4 3 0 5.500-1.500v4q-3 1.700-7 1.600Q3 19 3 12 3 8 8 5.300 6.600 7 6.500 8.500h6.800Q13.200 5 9.500 4.600 4.500 4.500 1 9Z" fill="#1677d2" />
          </Svg>
        </TaskButton>
        <TaskButton label="Explorateur de fichiers">
          <Svg size="size-5" box="0 0 20 20">
            <path d="M0 2h7l1.500 2H18v3h2v11H0Z" fill="#f4d16e" />
            <path d="M0 7h20v11H0Z" fill="#fbe39a" />
            <path d="M4 11h12v7h-3v-3H7v3H4Z" fill="#42a4d9" />
          </Svg>
        </TaskButton>
        <TaskButton label="Microsoft Store">
          <Svg size="size-[22px]" box="0 0 22 22">
            <path d="M6 7V1h10v6" stroke="#eee" strokeWidth="1.500" />
            <path d="M0 5h22v17H0Z" fill="#f3f3f1" />
            <path d="M7 9.500h4v4H7Z" fill="#df5332" /><path d="M12 9.500h4v4h-4Z" fill="#78b53b" />
            <path d="M7 14.500h4v4H7Z" fill="#2d9cd8" /><path d="M12 14.500h4v4h-4Z" fill="#efb82e" />
          </Svg>
        </TaskButton>
        <TaskButton label="Courrier">
          <Svg size="size-[22px]" box="0 0 22 22">
            <path d="M0 6 11 0l11 6v6H0Z" fill="#1268b0" />
            <path d="M0 7h22v14H0Z" fill="#20a2e5" />
            <path d="M0 6h22L11 14Z" fill="#eef7fc" />
            <path d="m0 21 11-9 11 9Z" fill="#38bdf2" />
            <path d="m0 7 11 7-2 1Z" fill="#38bdf2" />
          </Svg>
        </TaskButton>
        <TaskButton label="PDF Annotator" width="w-11" tone="border-[#6fb0e3] bg-[#3f3e43]">
          <AppLogo size="size-[22px]" />
        </TaskButton>
        <span className="flex w-12 justify-center">
          <TaskButton label="Chrome" width="w-[38px]" tone="border-[#6fb0e3]">
            <Svg size="size-[22px]" box="0 0 22 22">
              <circle cx="11" cy="11" r="11" fill="#f9c51e" />
              <path d="M1.500 5.500A11 11 0 0 1 20.500 5.500L11 6 6.200 13.700Z" fill="#e23b2e" />
              <path d="M1.500 5.500A11 11 0 0 0 10 22L15.500 14 6.200 13.700Z" fill="#249b4b" />
              <circle cx="11" cy="11" r="5.500" fill="#fff" /><circle cx="11" cy="11" r="4.200" fill="#3479e8" />
            </Svg>
          </TaskButton>
        </span>
        <TaskButton label="Zoom" tone="border-[#f97b13] bg-[#a85c25]">
          <span className="flex size-[23px] items-center justify-center rounded-full bg-[#125bdb] pb-0.5 text-[12px] leading-none font-bold text-white">zm</span>
        </TaskButton>
      </div>
      <div className="mr-1 flex flex-col items-center justify-center pb-[3px] text-[11px] leading-[17px] text-white">
        <time>14:49</time>
        <time>25/03/2026</time>
      </div>
    </footer>
  );
}

export default function App() {
  return (
    <div className="h-screen bg-black px-[10%] font-['Open_Sans','Noto_Sans',sans-serif]">
      <div className="flex h-full flex-col overflow-hidden">
        <TitleBar />
        <MenuBar />
        <MainToolbar />
        <TabStrip />
        <main className="flex min-h-0 flex-1">
          <Rail />
          <section className="flex min-w-0 flex-1 flex-col border-y border-l border-[#333]">
            <ToolPanel />
            <Document />
          </section>
        </main>
        <StatusBar />
        <Taskbar />
      </div>
    </div>
  );
}
